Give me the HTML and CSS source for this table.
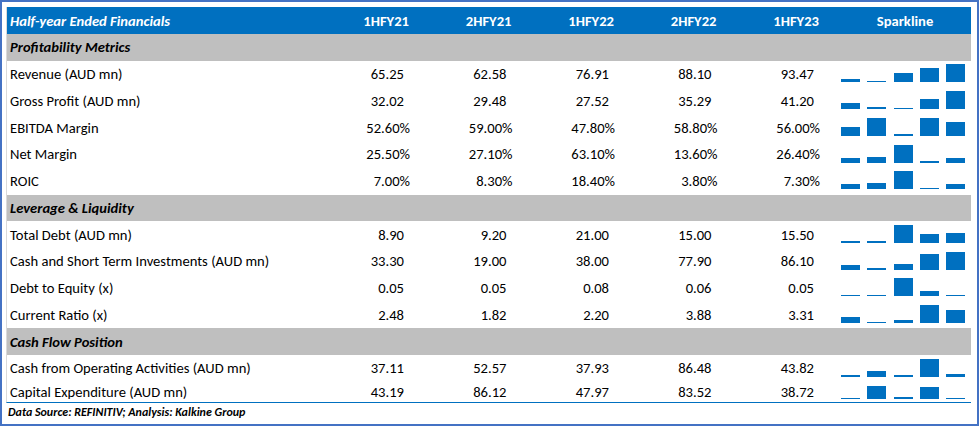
FILE: index.html
```html
<!DOCTYPE html>
<html lang="en">
<head>
<meta charset="utf-8">
<title>Half-year Ended Financials</title>
<link rel="stylesheet" href="styles.css">
</head>
<body>
<div class="frame">
  <div class="table">
    <div class="row head">
      <div class="label">Half-year Ended Financials</div>
      <div class="hc">1HFY21</div>
      <div class="hc">2HFY21</div>
      <div class="hc">1HFY22</div>
      <div class="hc">2HFY22</div>
      <div class="hc">1HFY23</div>
      <div class="hs">Sparkline</div>
    </div>

    <div class="row section"><div class="label">Profitability Metrics</div></div>

    <div class="row">
      <div class="label">Revenue (AUD mn)</div>
      <div class="v">65.25</div><div class="v">62.58</div><div class="v">76.91</div><div class="v">88.10</div><div class="v">93.47</div>
      <div class="spark"><i style="height:2.8px"></i><i style="height:1.4px"></i><i style="height:9px"></i><i style="height:14.7px"></i><i style="height:18px"></i></div>
    </div>
    <div class="row">
      <div class="label">Gross Profit (AUD mn)</div>
      <div class="v">32.02</div><div class="v">29.48</div><div class="v">27.52</div><div class="v">35.29</div><div class="v">41.20</div>
      <div class="spark"><i style="height:5.7px"></i><i style="height:2.3px"></i><i style="height:1.4px"></i><i style="height:10px"></i><i style="height:18px"></i></div>
    </div>
    <div class="row">
      <div class="label">EBITDA Margin</div>
      <div class="v p">52.60%</div><div class="v p">59.00%</div><div class="v p">47.80%</div><div class="v p">58.80%</div><div class="v p">56.00%</div>
      <div class="spark"><i style="height:8.3px"></i><i style="height:18px"></i><i style="height:1.4px"></i><i style="height:17.7px"></i><i style="height:13.3px"></i></div>
    </div>
    <div class="row">
      <div class="label">Net Margin</div>
      <div class="v p">25.50%</div><div class="v p">27.10%</div><div class="v p">63.10%</div><div class="v p">13.60%</div><div class="v p">26.40%</div>
      <div class="spark"><i style="height:4.8px"></i><i style="height:5.3px"></i><i style="height:18px"></i><i style="height:1.4px"></i><i style="height:5px"></i></div>
    </div>
    <div class="row">
      <div class="label">ROIC</div>
      <div class="v p">7.00%</div><div class="v p">8.30%</div><div class="v p">18.40%</div><div class="v p">3.80%</div><div class="v p">7.30%</div>
      <div class="spark"><i style="height:5px"></i><i style="height:6.2px"></i><i style="height:18px"></i><i style="height:1.4px"></i><i style="height:5.2px"></i></div>
    </div>

    <div class="row section"><div class="label">Leverage &amp; Liquidity</div></div>

    <div class="row">
      <div class="label">Total Debt (AUD mn)</div>
      <div class="v">8.90</div><div class="v">9.20</div><div class="v">21.00</div><div class="v">15.00</div><div class="v">15.50</div>
      <div class="spark"><i style="height:1.4px"></i><i style="height:1.6px"></i><i style="height:18px"></i><i style="height:8.4px"></i><i style="height:10px"></i></div>
    </div>
    <div class="row">
      <div class="label">Cash and Short Term Investments (AUD mn)</div>
      <div class="v">33.30</div><div class="v">19.00</div><div class="v">38.00</div><div class="v">77.90</div><div class="v">86.10</div>
      <div class="spark"><i style="height:4.4px"></i><i style="height:1.4px"></i><i style="height:5.7px"></i><i style="height:15.4px"></i><i style="height:18px"></i></div>
    </div>
    <div class="row">
      <div class="label">Debt to Equity (x)</div>
      <div class="v">0.05</div><div class="v">0.05</div><div class="v">0.08</div><div class="v">0.06</div><div class="v">0.05</div>
      <div class="spark"><i style="height:1.4px"></i><i style="height:1.4px"></i><i style="height:18px"></i><i style="height:5.4px"></i><i style="height:1.4px"></i></div>
    </div>
    <div class="row">
      <div class="label">Current Ratio (x)</div>
      <div class="v">2.48</div><div class="v">1.82</div><div class="v">2.20</div><div class="v">3.88</div><div class="v">3.31</div>
      <div class="spark"><i style="height:5.6px"></i><i style="height:1.4px"></i><i style="height:3.3px"></i><i style="height:18px"></i><i style="height:13.3px"></i></div>
    </div>

    <div class="row section"><div class="label">Cash Flow Position</div></div>

    <div class="row">
      <div class="label">Cash from Operating Activities (AUD mn)</div>
      <div class="v">37.11</div><div class="v">52.57</div><div class="v">37.93</div><div class="v">86.48</div><div class="v">43.82</div>
      <div class="spark"><i style="height:1.4px"></i><i style="height:5.7px"></i><i style="height:1.6px"></i><i style="height:18px"></i><i style="height:2.6px"></i></div>
    </div>
    <div class="row last">
      <div class="label">Capital Expenditure (AUD mn)</div>
      <div class="v">43.19</div><div class="v">86.12</div><div class="v">47.97</div><div class="v">83.52</div><div class="v">38.72</div>
      <div class="spark"><i style="height:1.6px"></i><i style="height:13.3px"></i><i style="height:2px"></i><i style="height:12.2px"></i><i style="height:1.4px"></i></div>
    </div>
  </div>
  <div class="source">Data Source: REFINITIV; Analysis: Kalkine Group</div>
</div>
</body>
</html>
```

FILE: styles.css
```css
* { box-sizing: border-box; }

html, body {
  margin: 0;
  padding: 0;
  background: #ffffff;
}

body {
  font-family: "Carlito", "Lato", "Liberation Sans", sans-serif;
  color: #000000;
}

.frame {
  width: 979px;
  height: 426px;
  border: 2px solid #4472c4;
  padding: 5px 0 0 4px;
}

.table {
  width: 965px;
  border-left: 1px solid #dadada;
  border-bottom: 1.5px solid #0070c0;
}

.row {
  display: grid;
  grid-template-columns: 319.5px repeat(5, 102.5px) 132px;
  height: 26.75px;
  align-items: center;
  font-size: 14.6px;
}

.row.head {
  height: 27px;
  background: #0070c0;
  color: #ffffff;
  font-weight: 700;
}

.row.head .label {
  font-style: italic;
}

.row.section {
  background: #bfbfbf;
  font-weight: 700;
  font-style: italic;
  height: 26.75px;
}

.row.last {
  height: 20.25px;
  padding-top: 1px;
}

.label {
  padding-left: 3px;
  white-space: nowrap;
}

.hc {
  text-align: right;
  padding-right: 20px;
}

.hs {
  text-align: center;
}

.v {
  text-align: right;
  padding-right: 25px;
}

.v.p {
  padding-right: 19px;
}

.spark {
  align-self: stretch;
  display: flex;
  align-items: flex-end;
  gap: 7.25px;
  padding: 0 0 5.25px 2px;
}

.row.last .spark {
  padding-bottom: 2.7px;
}

.spark i {
  display: block;
  width: 19px;
  background: #0070c0;
}

.source {
  font-size: 12px;
  font-weight: 700;
  font-style: italic;
  padding: 2px 0 0 2px;
}
```
